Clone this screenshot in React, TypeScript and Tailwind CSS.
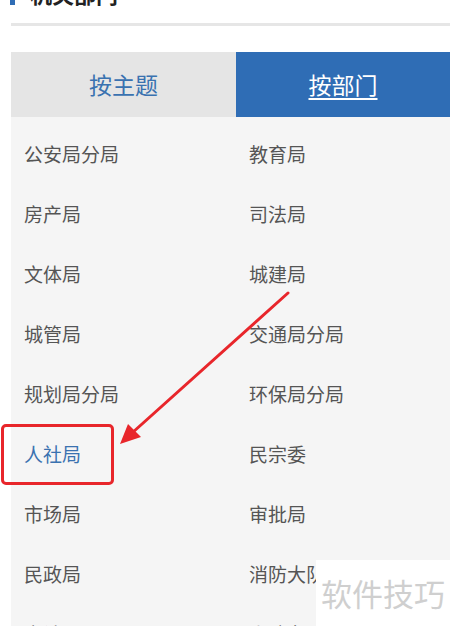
const rows: [string, string][] = [
  ['公安局分局', '教育局'],
  ['房产局', '司法局'],
  ['文体局', '城建局'],
  ['城管局', '交通局分局'],
  ['规划局分局', '环保局分局'],
  ['人社局', '民宗委'],
  ['市场局', '审批局'],
  ['民政局', '消防大队'],
  ['审计局', '人防办'],
];

const font = { fontFamily: '"Noto Sans CJK SC", "Noto Sans", sans-serif' };

export default function App() {
  return (
    <div className="relative h-[626px] w-[450px] overflow-hidden bg-white" style={font}>
      <div className="h-[23px] overflow-hidden">
        <div className="-mt-[19px] flex items-stretch gap-[15px] pl-[10px]">
          <span className="block w-[5px] bg-[#2f6db5]" />
          <span className="text-[22px] leading-[24px] font-bold text-[#222]">机关部门</span>
        </div>
      </div>
      <div className="ml-[11px] h-[3px] bg-[#e6e6e6]" />

      <div className="mt-[26px] ml-[11px]">
        <div className="flex h-[65px]">
          <div className="flex w-[225px] items-center justify-center bg-[#e5e5e5] text-[23px] text-[#3a72b0]">按主题</div>
          <div className="flex flex-1 items-center justify-center bg-[#2f6db5] text-[23px] text-white underline underline-offset-4">
            按部门
          </div>
        </div>
        <div className="bg-[#f5f5f5] pt-[7px]">
          {rows.map(([a, b]) => (
            <div key={a} className="grid h-[60px] grid-cols-[225px_1fr] items-center text-[19px] text-[#555]">
              <span className={`pl-[13px] ${a === '人社局' ? 'text-[#3a72b0]' : ''}`}>{a}</span>
              <span className="pl-[13px]">{b}</span>
            </div>
          ))}
        </div>
      </div>

      <div className="absolute top-[424px] left-[1px] h-[61px] w-[113px] rounded-[5px] border-[3px] border-[#e8262b]" />

      <svg className="absolute top-0 left-0" width="450" height="626">
        <line x1="288" y1="293" x2="132" y2="433" stroke="#e8262b" strokeWidth="3" strokeLinecap="round" />
        <polygon points="120,444 128,424 141,437" fill="#e8262b" />
      </svg>

      <div className="absolute top-[560px] left-[316px] flex h-[66px] w-[134px] items-center justify-center bg-white text-[31px] text-[#cfcfcf]">
        软件技巧
      </div>
    </div>
  );
}
